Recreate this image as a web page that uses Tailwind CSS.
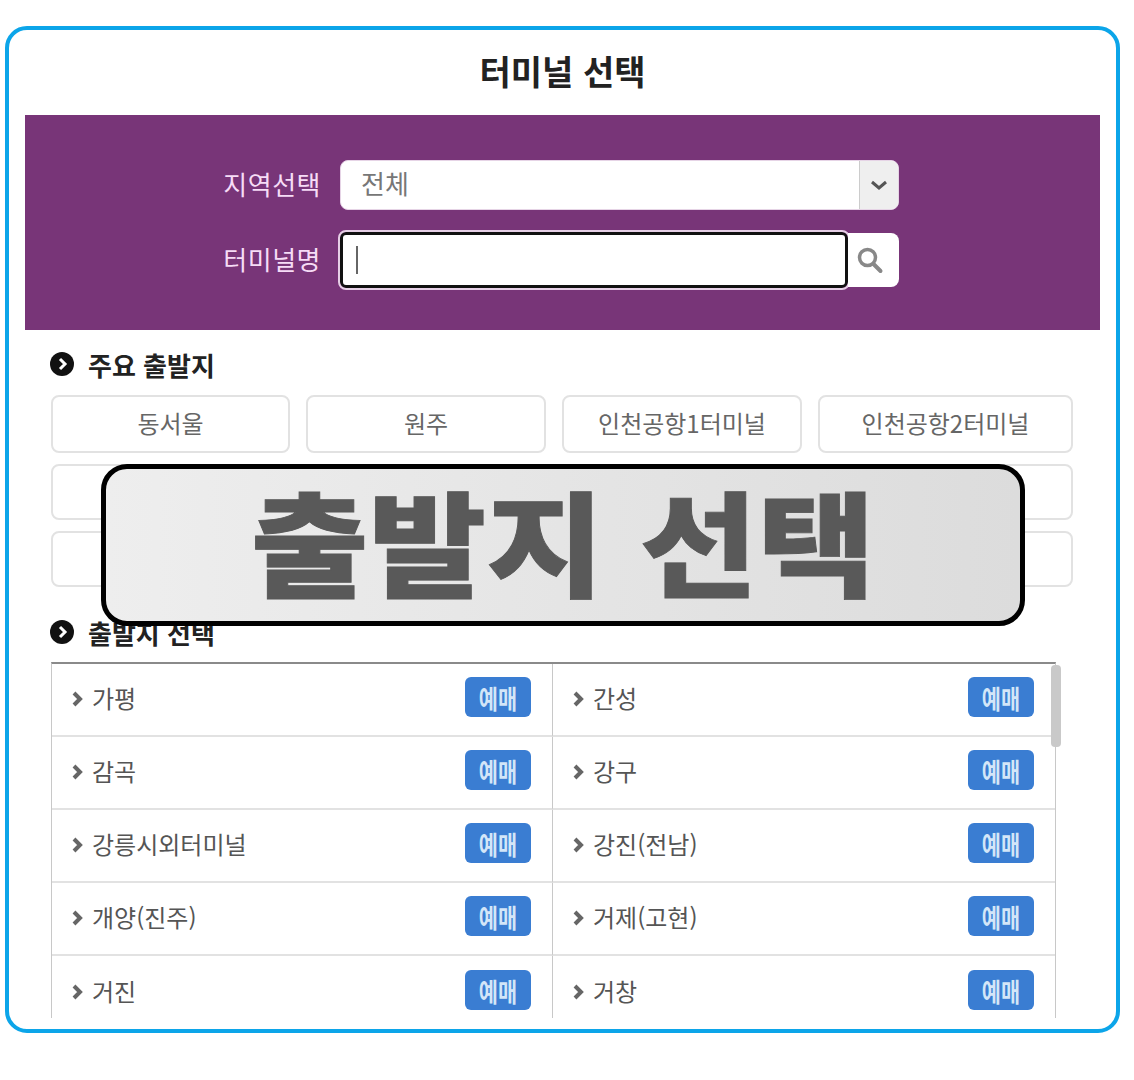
<!DOCTYPE html>
<html lang="ko">
<head>
    <meta charset="UTF-8">
    <meta name="viewport" content="width=device-width, initial-scale=1.0">
    <title>터미널 선택</title>
    <script src="https://cdn.jsdelivr.net/npm/@tailwindcss/browser@4"></script>
</head>
<body class="bg-white font-['Noto_Sans_CJK_KR','Noto_Sans',sans-serif]">
    <!-- Card -->
    <div class="relative mt-[26px] ml-[5px] w-[1115px] h-[1007px] border-4 border-[#0ca5e9] rounded-[22px] bg-white px-4 overflow-hidden">
        <h1 class="h-[85px] pb-[5px] flex items-center justify-center text-[34px] font-bold text-[#222]">터미널 선택</h1>

        <!-- Search panel -->
        <div class="h-[215px] bg-[#783578] pt-[45px] flex flex-col gap-[22px]">
            <div class="flex items-center">
                <label class="w-[296px] pb-[3px] text-right text-[26px] leading-none tracking-[0.5px] text-[#f6dcf6]">지역선택</label>
                <div class="ml-[19px] w-[559px] h-[50px] bg-white border border-[#e6d4e6] rounded-lg flex overflow-hidden">
                    <span class="flex-1 pl-5 pb-[5px] flex items-center text-[26px] text-[#777]">전체</span>
                    <span class="w-[39px] bg-[#efefef] border-l border-[#ccc] flex items-center justify-center">
                        <svg width="18" height="12" viewBox="0 0 18 12" fill="none" stroke="#555" stroke-width="3"><path d="M2 3l7 6 7-6"/></svg>
                    </span>
                </div>
            </div>
            <div class="flex items-center">
                <label class="w-[296px] pb-[3px] text-right text-[26px] leading-none tracking-[0.5px] text-[#f6dcf6]">터미널명</label>
                <div class="ml-[19px] w-[559px] h-[56px] flex">
                    <div class="w-[508px] bg-white border-[3px] border-[#111] rounded-md outline-2 outline-[#e6cfe6] flex items-center pl-[13px]">
                        <span class="w-[2px] h-[28px] bg-[#666]"></span>
                    </div>
                    <div class="flex-1 bg-white rounded-r-lg flex items-center pl-2 my-[1px]">
                        <svg width="28" height="30" viewBox="0 0 28 30" fill="none" stroke="#888"><circle cx="11.500" cy="12.500" r="8" stroke-width="3.500"/><path d="M17.500 19l7 7" stroke-width="4" stroke-linecap="round"/></svg>
                    </div>
                </div>
            </div>
        </div>

        <!-- Main departures -->
        <div class="pl-[26px]">
            <div class="-ml-px mt-[19px] h-[30px] flex items-center">
                <svg width="24" height="24" viewBox="0 0 24 24"><circle cx="12" cy="12" r="12" fill="#111"/><path d="M10 7l5 5-5 5" fill="none" stroke="#fff" stroke-width="3"/></svg>
                <h2 class="ml-[14px] text-[26px] font-bold text-[#222]">주요 출발지</h2>
            </div>
            <div class="mt-4 grid grid-cols-[239px_240px_240px_255px] grid-rows-[58px_56px_56px] gap-x-4 gap-y-[11px] w-[1022px] text-[24px] text-[#666]">
                <button class="pb-[2px] border-2 border-[#e2e2e2] rounded-lg">동서울</button>
                <button class="pb-[2px] border-2 border-[#e2e2e2] rounded-lg">원주</button>
                <button class="pb-[2px] border-2 border-[#e2e2e2] rounded-lg">인천공항1터미널</button>
                <button class="pb-[2px] border-2 border-[#e2e2e2] rounded-lg">인천공항2터미널</button>
                <button class="border-2 border-[#e2e2e2] rounded-lg"></button>
                <button class="border-2 border-[#e2e2e2] rounded-lg"></button>
                <button class="border-2 border-[#e2e2e2] rounded-lg"></button>
                <button class="border-2 border-[#e2e2e2] rounded-lg"></button>
                <button class="border-2 border-[#e2e2e2] rounded-lg"></button>
                <button class="border-2 border-[#e2e2e2] rounded-lg"></button>
                <button class="border-2 border-[#e2e2e2] rounded-lg"></button>
                <button class="border-2 border-[#e2e2e2] rounded-lg"></button>
            </div>

            <!-- Departure list -->
            <div class="-ml-px mt-[30px] h-[30px] flex items-center">
                <svg width="24" height="24" viewBox="0 0 24 24"><circle cx="12" cy="12" r="12" fill="#111"/><path d="M10 7l5 5-5 5" fill="none" stroke="#fff" stroke-width="3"/></svg>
                <h2 class="ml-[14px] text-[26px] font-bold text-[#222]">출발지 선택</h2>
            </div>
            <div class="relative mt-[15px] w-[1005px]">
                <div class="h-[356px] overflow-hidden border-x border-[#c8c8c8] border-t-2 border-t-[#8a8a8a] grid grid-cols-[501px_1fr] auto-rows-[73px] text-[24px] text-[#555]">
                    <div class="flex items-center pl-5 pr-[21px] border-b-2 border-[#e2e2e2] border-r border-r-[#c8c8c8]">
                        <svg class="mb-[2px]" width="12" height="16" viewBox="0 0 12 16" fill="none" stroke="#666" stroke-width="4"><path d="M2 2l6 6-6 6"/></svg>
                        <span class="ml-2 pb-[3px] flex-1">가평</span>
                        <span class="mb-[5px] w-[66px] h-10 bg-[#3a7dd2] rounded-md flex items-center justify-center"><span class="text-[26px] font-bold text-[#d3e6f8] scale-x-80">예매</span></span>
                    </div>
                    <div class="flex items-center pl-5 pr-[21px] border-b-2 border-[#e2e2e2]">
                        <svg class="mb-[2px]" width="12" height="16" viewBox="0 0 12 16" fill="none" stroke="#666" stroke-width="4"><path d="M2 2l6 6-6 6"/></svg>
                        <span class="ml-2 pb-[3px] flex-1">간성</span>
                        <span class="mb-[5px] w-[66px] h-10 bg-[#3a7dd2] rounded-md flex items-center justify-center"><span class="text-[26px] font-bold text-[#d3e6f8] scale-x-80">예매</span></span>
                    </div>
                    <div class="flex items-center pl-5 pr-[21px] border-b-2 border-[#e2e2e2] border-r border-r-[#c8c8c8]">
                        <svg class="mb-[2px]" width="12" height="16" viewBox="0 0 12 16" fill="none" stroke="#666" stroke-width="4"><path d="M2 2l6 6-6 6"/></svg>
                        <span class="ml-2 pb-[3px] flex-1">감곡</span>
                        <span class="mb-[5px] w-[66px] h-10 bg-[#3a7dd2] rounded-md flex items-center justify-center"><span class="text-[26px] font-bold text-[#d3e6f8] scale-x-80">예매</span></span>
                    </div>
                    <div class="flex items-center pl-5 pr-[21px] border-b-2 border-[#e2e2e2]">
                        <svg class="mb-[2px]" width="12" height="16" viewBox="0 0 12 16" fill="none" stroke="#666" stroke-width="4"><path d="M2 2l6 6-6 6"/></svg>
                        <span class="ml-2 pb-[3px] flex-1">강구</span>
                        <span class="mb-[5px] w-[66px] h-10 bg-[#3a7dd2] rounded-md flex items-center justify-center"><span class="text-[26px] font-bold text-[#d3e6f8] scale-x-80">예매</span></span>
                    </div>
                    <div class="flex items-center pl-5 pr-[21px] border-b-2 border-[#e2e2e2] border-r border-r-[#c8c8c8]">
                        <svg class="mb-[2px]" width="12" height="16" viewBox="0 0 12 16" fill="none" stroke="#666" stroke-width="4"><path d="M2 2l6 6-6 6"/></svg>
                        <span class="ml-2 pb-[3px] flex-1">강릉시외터미널</span>
                        <span class="mb-[5px] w-[66px] h-10 bg-[#3a7dd2] rounded-md flex items-center justify-center"><span class="text-[26px] font-bold text-[#d3e6f8] scale-x-80">예매</span></span>
                    </div>
                    <div class="flex items-center pl-5 pr-[21px] border-b-2 border-[#e2e2e2]">
                        <svg class="mb-[2px]" width="12" height="16" viewBox="0 0 12 16" fill="none" stroke="#666" stroke-width="4"><path d="M2 2l6 6-6 6"/></svg>
                        <span class="ml-2 pb-[3px] flex-1">강진(전남)</span>
                        <span class="mb-[5px] w-[66px] h-10 bg-[#3a7dd2] rounded-md flex items-center justify-center"><span class="text-[26px] font-bold text-[#d3e6f8] scale-x-80">예매</span></span>
                    </div>
                    <div class="flex items-center pl-5 pr-[21px] border-b-2 border-[#e2e2e2] border-r border-r-[#c8c8c8]">
                        <svg class="mb-[2px]" width="12" height="16" viewBox="0 0 12 16" fill="none" stroke="#666" stroke-width="4"><path d="M2 2l6 6-6 6"/></svg>
                        <span class="ml-2 pb-[3px] flex-1">개양(진주)</span>
                        <span class="mb-[5px] w-[66px] h-10 bg-[#3a7dd2] rounded-md flex items-center justify-center"><span class="text-[26px] font-bold text-[#d3e6f8] scale-x-80">예매</span></span>
                    </div>
                    <div class="flex items-center pl-5 pr-[21px] border-b-2 border-[#e2e2e2]">
                        <svg class="mb-[2px]" width="12" height="16" viewBox="0 0 12 16" fill="none" stroke="#666" stroke-width="4"><path d="M2 2l6 6-6 6"/></svg>
                        <span class="ml-2 pb-[3px] flex-1">거제(고현)</span>
                        <span class="mb-[5px] w-[66px] h-10 bg-[#3a7dd2] rounded-md flex items-center justify-center"><span class="text-[26px] font-bold text-[#d3e6f8] scale-x-80">예매</span></span>
                    </div>
                    <div class="flex items-center pl-5 pr-[21px] border-r border-r-[#c8c8c8]">
                        <svg class="mb-[2px]" width="12" height="16" viewBox="0 0 12 16" fill="none" stroke="#666" stroke-width="4"><path d="M2 2l6 6-6 6"/></svg>
                        <span class="ml-2 pb-[3px] flex-1">거진</span>
                        <span class="mb-[5px] w-[66px] h-10 bg-[#3a7dd2] rounded-md flex items-center justify-center"><span class="text-[26px] font-bold text-[#d3e6f8] scale-x-80">예매</span></span>
                    </div>
                    <div class="flex items-center pl-5 pr-[21px]">
                        <svg class="mb-[2px]" width="12" height="16" viewBox="0 0 12 16" fill="none" stroke="#666" stroke-width="4"><path d="M2 2l6 6-6 6"/></svg>
                        <span class="ml-2 pb-[3px] flex-1">거창</span>
                        <span class="mb-[5px] w-[66px] h-10 bg-[#3a7dd2] rounded-md flex items-center justify-center"><span class="text-[26px] font-bold text-[#d3e6f8] scale-x-80">예매</span></span>
                    </div>
                </div>
                <!-- Scrollbar thumb -->
                <div class="absolute top-[3px] -right-[5px] w-[10px] h-[82px] bg-[#c9c9c9] rounded-sm"></div>
            </div>
        </div>

        <!-- Caption banner over the page -->
        <div class="absolute left-[92px] top-[434px] w-[924px] h-[162px] border-[5px] border-black rounded-[26px] bg-linear-to-r from-[#eeeeee] to-[#dcdcdc] flex items-center justify-center">
            <span class="mb-[13px] text-[128px] leading-none font-black text-[#595959] [-webkit-text-stroke:1px_#595959] scale-y-90">출발지 선택</span>
        </div>
    </div>
</body>
</html>
